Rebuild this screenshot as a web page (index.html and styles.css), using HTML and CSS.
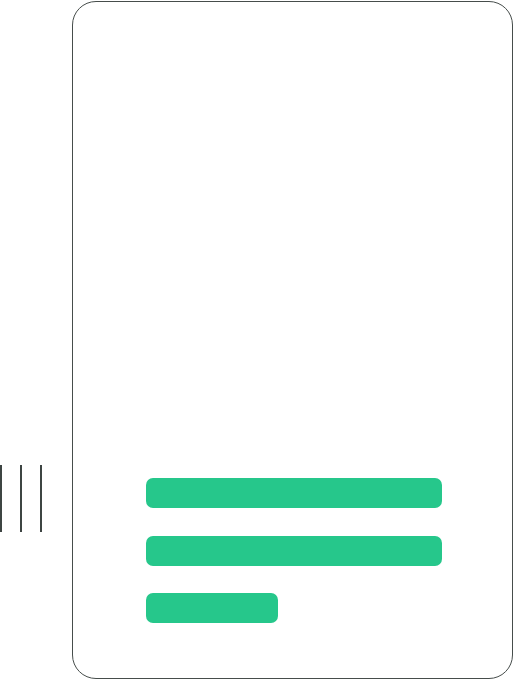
FILE: index.html
```html
<!DOCTYPE html>
<html>
<head>
<meta charset="utf-8">
<link rel="stylesheet" href="styles.css">
</head>
<body>
<div class="scene">
  <div class="lines">
    <span class="line"></span>
    <span class="line"></span>
    <span class="line"></span>
  </div>
  <div class="card">
    <div class="bar"></div>
    <div class="bar"></div>
    <div class="bar short"></div>
  </div>
</div>
</body>
</html>
```
FILE: styles.css
```css
html, body {
  margin: 0;
  padding: 0;
  background: #ffffff;
}
.scene {
  display: flex;
  align-items: flex-start;
  width: 513px;
  height: 680px;
}
.lines {
  display: flex;
  gap: 18px;
  margin-top: 465px;
  height: 67px;
}
.line {
  display: block;
  width: 2px;
  height: 67px;
  background: #3e4543;
}
.card {
  box-sizing: border-box;
  margin-top: 1px;
  margin-left: 30px;
  width: 441px;
  height: 678px;
  border: 1.3px solid #464d4b;
  border-radius: 24px;
  display: flex;
  flex-direction: column;
  justify-content: flex-end;
  gap: 27.5px;
  padding: 0 0 55px 73px;
}
.bar {
  width: 296px;
  height: 30px;
  border-radius: 7px;
  background: #26c78b;
}
.bar.short {
  width: 132px;
}
```
